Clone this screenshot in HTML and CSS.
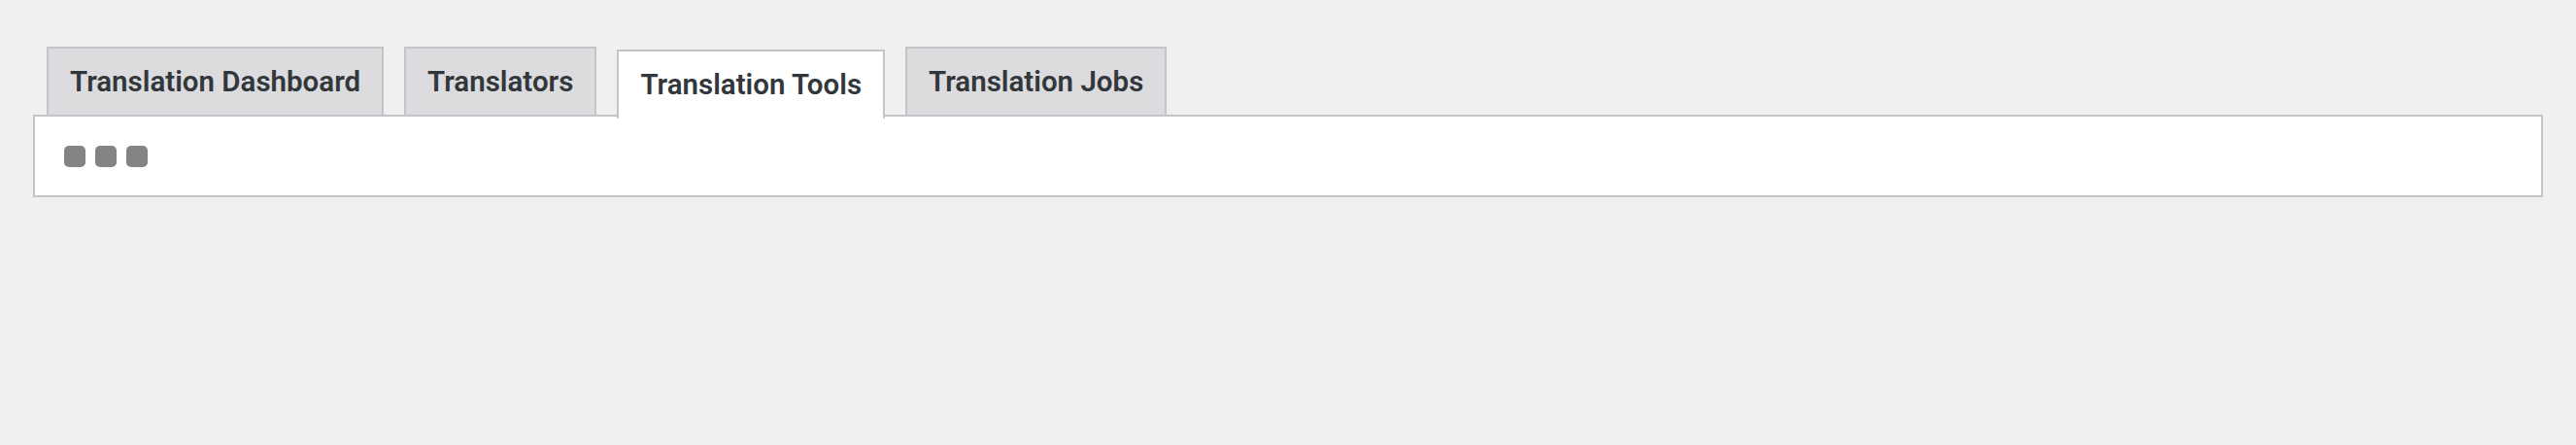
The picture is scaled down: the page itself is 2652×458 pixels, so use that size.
FILE: index.html
```html
<!DOCTYPE html>
<html lang="en">
<head>
    <title>Translation Tools</title>
    <link rel="stylesheet" href="styles.css">
</head>
<body>
    <div class="wrap">
        <nav class="nav-tabs">
            <a class="nav-tab" href="#">Translation Dashboard</a>
            <a class="nav-tab" href="#">Translators</a>
            <a class="nav-tab nav-tab-active" href="#">Translation Tools</a>
            <a class="nav-tab" href="#">Translation Jobs</a>
        </nav>
        <div class="tab-panel">
            <div class="loader">
                <span class="dot"></span>
                <span class="dot"></span>
                <span class="dot"></span>
            </div>
        </div>
    </div>
</body>
</html>
```

FILE: styles.css
```css
body {
    margin: 0;
    background-color: #f0f0f1;
    font-family: Roboto, "Liberation Sans", Arial, sans-serif;
    color: #32373c;
}

.wrap {
    padding: 48px 34px 0 34px;
}

.nav-tabs {
    display: flex;
    align-items: flex-start;
    gap: 21px;
    padding-left: 14px;
    margin-bottom: -2px;
}

.nav-tab {
    display: block;
    padding: 10px 22px;
    font-size: 29.5px;
    font-weight: 600;
    line-height: 48px;
    color: #32373c;
    text-decoration: none;
    background-color: #dcdcde;
    border: 2px solid #c3c4c7;
    white-space: nowrap;
}

/* sits 3px lower and overlaps the panel border */
.nav-tab-active {
    position: relative;
    z-index: 1;
    margin-top: 3px;
    margin-bottom: -3px;
    background-color: #fff;
    border-bottom-color: #fff;
}

.tab-panel {
    background: #fff;
    border: 2px solid #c3c4c7;
    padding: 30px 30px 29px 30px;
}

.loader {
    display: flex;
    gap: 10px;
}

.dot {
    width: 22px;
    height: 22px;
    border-radius: 5px;
    background-color: #848484;
}
```
